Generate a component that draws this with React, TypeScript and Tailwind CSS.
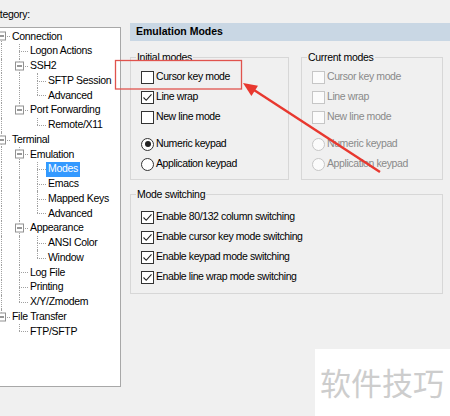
import React from 'react';

interface TreeNode {
  label: string;
  cont: boolean[];
  kids?: boolean;
  last?: boolean;
  first?: boolean;
  selected?: boolean;
}

const tree: TreeNode[] = [
  { label: 'Connection', cont: [], kids: true, first: true },
  { label: 'Logon Actions', cont: [true] },
  { label: 'SSH2', cont: [true], kids: true },
  { label: 'SFTP Session', cont: [true, true] },
  { label: 'Advanced', cont: [true, true], last: true },
  { label: 'Port Forwarding', cont: [true], kids: true, last: true },
  { label: 'Remote/X11', cont: [true, false], last: true },
  { label: 'Terminal', cont: [], kids: true },
  { label: 'Emulation', cont: [true], kids: true },
  { label: 'Modes', cont: [true, true], selected: true },
  { label: 'Emacs', cont: [true, true] },
  { label: 'Mapped Keys', cont: [true, true] },
  { label: 'Advanced', cont: [true, true], last: true },
  { label: 'Appearance', cont: [true], kids: true },
  { label: 'ANSI Color', cont: [true, true] },
  { label: 'Window', cont: [true, true], last: true },
  { label: 'Log File', cont: [true] },
  { label: 'Printing', cont: [true] },
  { label: 'X/Y/Zmodem', cont: [true], last: true },
  { label: 'File Transfer', cont: [], kids: true, last: true },
  { label: 'FTP/SFTP', cont: [false], last: true },
];

const line = 'absolute border-[#a0a0a0] border-dotted';

const TreeRow: React.FC<{ n: TreeNode }> = ({ n }) => (
  <div className="flex h-[14.75px]">
    {n.cont.map((c, i) => (
      <div key={i} className="relative w-[18px] shrink-0">
        {c && <div className={`${line} left-[1px] top-0 bottom-0 border-l`} />}
      </div>
    ))}
    <div className="relative w-[10px] shrink-0">
      {!n.first && <div className={`${line} left-[1px] top-0 h-1/2 border-l`} />}
      {!n.last && <div className={`${line} left-[1px] top-1/2 bottom-0 border-l`} />}
      <div className={`${line} left-[1px] right-0 top-1/2 border-t`} />
      {n.kids && (
        <span className="absolute left-[-3px] top-1/2 -translate-y-1/2 w-[9px] h-[9px] border border-[#919191] bg-white flex items-center justify-center">
          <span className="w-[5px] h-px bg-[#333]" />
        </span>
      )}
    </div>
    <span
      className={`flex items-center px-[2px] whitespace-nowrap ${
        n.selected ? 'bg-[#3399ff] text-white' : 'text-black'
      }`}
    >
      {n.label}
    </span>
  </div>
);

const CheckBox: React.FC<{ checked?: boolean; disabled?: boolean }> = ({ checked, disabled }) => (
  <span
    className={`w-[13px] h-[13px] shrink-0 border flex items-center justify-center ${
      disabled ? 'border-[#c6c6c6] bg-[#fbfbfb]' : 'border-[#333] bg-white'
    }`}
  >
    {checked && (
      <svg width="11" height="11" viewBox="0 0 11 11">
        <polyline points="1.5,5.5 4.2,8.3 9.5,2.3" fill="none" stroke="#222" strokeWidth="1.1" />
      </svg>
    )}
  </span>
);

const Radio: React.FC<{ checked?: boolean; disabled?: boolean }> = ({ checked, disabled }) => (
  <span
    className={`w-[13px] h-[13px] shrink-0 rounded-full border flex items-center justify-center ${
      disabled ? 'border-[#c6c6c6] bg-[#fbfbfb]' : 'border-[#333] bg-white'
    }`}
  >
    {checked && <span className="w-[6px] h-[6px] rounded-full bg-[#222]" />}
  </span>
);

const Row: React.FC<{ label: string; checked?: boolean; disabled?: boolean; radio?: boolean }> = ({
  label,
  checked,
  disabled,
  radio,
}) => (
  <div
    className={`flex items-center gap-[2px] h-[20px] tracking-[-0.4px] ${
      disabled ? 'text-[#8a8a8a]' : 'text-black'
    }`}
  >
    {radio ? <Radio checked={checked} disabled={disabled} /> : <CheckBox checked={checked} disabled={disabled} />}
    <span className="whitespace-nowrap">{label}</span>
  </div>
);

const Group: React.FC<{ title: string; className: string; children: React.ReactNode }> = ({
  title,
  className,
  children,
}) => (
  <fieldset className={`border border-[#d7d7d7] ${className}`}>
    <legend className="ml-[5px] px-[1px] leading-[12px] text-black">{title}</legend>
    {children}
  </fieldset>
);

export default function App() {
  return (
    <div className="relative w-[450px] h-[416px] overflow-hidden bg-[#f0f0f0] font-['Liberation_Sans',Arial,sans-serif] text-[10.5px] tracking-[-0.3px]">
      <div className="flex">
        {/* category tree */}
        <div className="w-[121px] shrink-0">
          <div className="h-[27px] pt-[8px] leading-[13px] -ml-[13px] text-black">Category:</div>
          <div className="h-[360px] bg-white border-r border-b border-t border-[#a8a8a8] pt-px">
            {tree.map((n, i) => (
              <TreeRow key={i} n={n} />
            ))}
          </div>
        </div>

        {/* settings page */}
        <div className="ml-[9px] w-[313px] pt-[23px]">
          <div className="w-[320px] h-[18px] bg-[#c9d7e4] pl-[6px] flex items-center font-bold tracking-normal text-black">
            Emulation Modes
          </div>

          <div className="flex gap-[12px] mt-[10px]">
            <Group title="Initial modes" className="w-[159px] h-[129px]">
              <div className="pl-[10px] pt-[4px]">
                <Row label="Cursor key mode" />
                <Row label="Line wrap" checked />
                <Row label="New line mode" />
                <div className="h-[7px]" />
                <Row label="Numeric keypad" radio checked />
                <Row label="Application keypad" radio />
              </div>
            </Group>
            <Group title="Current modes" className="w-[142px] h-[129px]">
              <div className="pl-[10px] pt-[4px]">
                <Row label="Cursor key mode" disabled />
                <Row label="Line wrap" disabled />
                <Row label="New line mode" disabled />
                <div className="h-[7px]" />
                <Row label="Numeric keypad" radio disabled />
                <Row label="Application keypad" radio disabled />
              </div>
            </Group>
          </div>

          <Group title="Mode switching" className="w-[313px] h-[106px] mt-[8px]">
            <div className="pl-[10px] pt-[7px]">
              <Row label="Enable 80/132 column switching" checked />
              <Row label="Enable cursor key mode switching" checked />
              <Row label="Enable keypad mode switching" checked />
              <Row label="Enable line wrap mode switching" checked />
            </div>
          </Group>
        </div>
      </div>

      {/* annotation */}
      <svg className="absolute inset-0 pointer-events-none" width="450" height="416">
        <rect x="115.5" y="60.5" width="126" height="28.5" fill="none" stroke="#e0534d" strokeWidth="1.3" />
        <line x1="380" y1="172" x2="254" y2="90" stroke="#e8382f" strokeWidth="2.4" />
        <polygon points="243,83 258,85.8 251.4,96" fill="#e8382f" />
      </svg>

      {/* watermark */}
      <div className="absolute left-[315px] top-[349px] w-[135px] h-[67px] bg-white flex items-center pl-[5px] text-[31px] tracking-normal text-[#cdcdcd] font-['Noto_Sans_CJK_SC',sans-serif]">
        软件技巧
      </div>
    </div>
  );
}
